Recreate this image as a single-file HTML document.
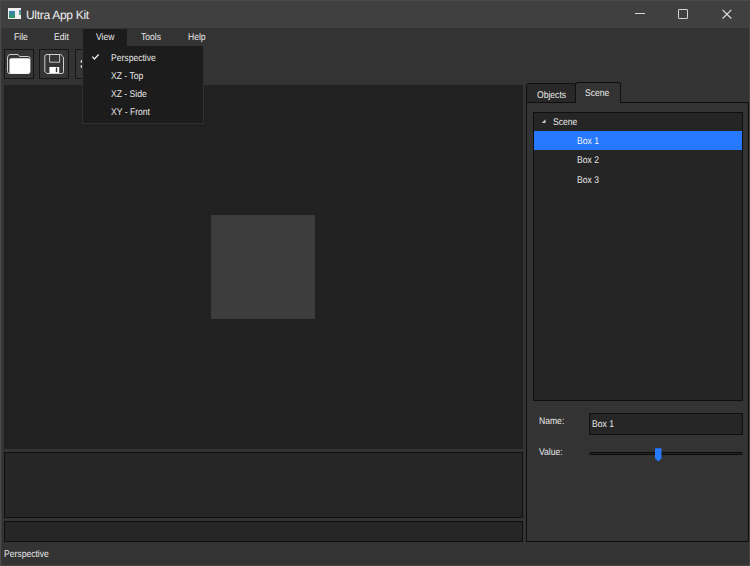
<!DOCTYPE html>
<html><head><meta charset="utf-8">
<style>
html,body{margin:0;padding:0;width:750px;height:566px;overflow:hidden;background:#333333;}
body{position:relative;font-family:"Liberation Sans",sans-serif;color:#e8e8e8;text-rendering:geometricPrecision;}
.a{position:absolute;box-sizing:border-box;}
.t{position:absolute;white-space:nowrap;font-size:9.75px;line-height:10px;transform:scaleX(0.88);transform-origin:0 0;color:#e8e8e8;margin-top:1px;}
</style></head><body>

<!-- title bar -->
<div class="a" style="left:0;top:0;width:750px;height:28px;background:#404040;"></div>
<!-- app icon -->
<div class="a" style="left:8px;top:8px;width:13px;height:11px;background:#efefef;"></div>
<div class="a" style="left:9px;top:11px;width:6px;height:7px;background:linear-gradient(180deg,#3a7fb8,#2f9a55);"></div>
<div class="a" style="left:19px;top:10px;width:2px;height:5px;background:linear-gradient(180deg,#4a8ac0,#5fae6a);"></div>
<div class="t" style="left:26px;top:8px;font-size:12px;line-height:14px;letter-spacing:-0.3px;color:#f0f0f0;transform:none;margin-top:0;">Ultra App Kit</div>
<!-- window controls -->
<div class="a" style="left:635px;top:13px;width:10px;height:1px;background:#d4d4d4;"></div>
<div class="a" style="left:678px;top:9px;width:10px;height:10px;border:1px solid #d4d4d4;border-radius:1px;"></div>
<svg class="a" style="left:720px;top:7px;" width="14" height="14" viewBox="0 0 14 14"><path d="M2.6 2.8L11.3 11.5M11.3 2.8L2.6 11.5" stroke="#e2e2e2" stroke-width="1.1" fill="none"/></svg>

<!-- menu bar -->
<div class="t" style="left:14px;top:32px;">File</div>
<div class="t" style="left:54px;top:32px;">Edit</div>
<div class="a" style="left:83px;top:29px;width:44px;height:18px;background:#1c1c1c;"></div>
<div class="t" style="left:96px;top:32px;">View</div>
<div class="t" style="left:141px;top:32px;">Tools</div>
<div class="t" style="left:188px;top:32px;">Help</div>

<!-- toolbar buttons -->
<div class="a" style="left:4px;top:49px;width:30px;height:30px;border:1px solid #161616;background:#353535;"></div>
<div class="a" style="left:39px;top:49px;width:30px;height:30px;border:1px solid #161616;background:#353535;"></div>
<div class="a" style="left:75px;top:49px;width:30px;height:30px;border:1px solid #161616;background:#353535;"></div>
<!-- folder icon -->
<svg class="a" style="left:0;top:44px;" width="40" height="40" viewBox="0 0 40 40">
  <path d="M7.5 14 Q7.5 10.5 10 10.5 L18 10.5 L19.6 12.5 L28.3 12.5 Q30 12.5 30 14.5 L30 27.5 Q30 29.5 28 29.5 L9.5 29.5 Q7.5 29.5 7.5 27.5 Z" fill="none" stroke="#cccccc" stroke-width="1"/>
  <path d="M9.4 16.3 Q9.4 14.3 11.4 14.3 L28 14.3 Q30 14.3 30 16.3 L30 27.7 Q30 29.7 28 29.7 L11.2 29.7 Q9.4 29.7 9.4 27.9 Z" fill="#ffffff"/>
</svg>
<!-- save icon -->
<svg class="a" style="left:34px;top:44px;" width="40" height="40" viewBox="0 0 40 40">
  <path d="M12.8 10.5 L26.8 10.5 L29.5 13.2 L29.5 27.8 Q29.5 29.5 27.8 29.5 L12.8 29.5 L10.8 27.5 L10.8 12.5 Q10.8 10.5 12.8 10.5 Z" fill="none" stroke="#cfcfcf" stroke-width="1"/>
  <path d="M15.6 10.5 L15.6 18.2 L25.6 18.2 L25.6 10.5" fill="none" stroke="#c4c4c4" stroke-width="1"/>
  <rect x="15.4" y="23" width="9.8" height="6" fill="#ffffff"/>
  <rect x="21.8" y="23.6" width="1.4" height="4.5" fill="#333"/>
</svg>
<!-- third icon sliver -->
<svg class="a" style="left:76px;top:56px;" width="7" height="16" viewBox="0 0 7 16"><path d="M6 3.5 L4.2 5.6 L6 7.2 Z M6 8.8 L4.2 10.4 L6 12.3 Z" fill="#d8d8d8"/></svg>

<!-- viewport -->
<div class="a" style="left:4px;top:85px;width:519px;height:364px;background:#212121;"></div>
<div class="a" style="left:211px;top:215px;width:104px;height:104px;background:#3d3d3d;box-shadow:inset 0 0 1px #303030;"></div>

<!-- console -->
<div class="a" style="left:4px;top:452px;width:519px;height:66px;border:1px solid #0f0f0f;background:#262626;"></div>
<div class="a" style="left:4px;top:521px;width:519px;height:21px;border:1px solid #0f0f0f;background:#262626;"></div>
<div class="t" style="left:4px;top:548.5px;">Perspective</div>

<!-- right panel -->
<div class="a" style="left:526px;top:83px;width:50px;height:20px;background:#282828;border:1px solid #0f0f0f;border-radius:3px 3px 0 0;"></div>
<div class="t" style="left:537px;top:90px;">Objects</div>
<div class="a" style="left:526px;top:102px;width:223px;height:440px;border:1px solid #0f0f0f;background:#333;"></div>
<div class="a" style="left:575px;top:82px;width:46px;height:21px;background:#333;border:1px solid #0f0f0f;border-bottom:none;border-radius:3px 3px 0 0;"></div>
<div class="t" style="left:585px;top:88px;">Scene</div>

<!-- tree -->
<div class="a" style="left:533px;top:112px;width:210px;height:289px;border:1px solid #0f0f0f;background:#252525;"></div>
<svg class="a" style="left:540px;top:118px;" width="7" height="7" viewBox="0 0 7 7"><path d="M5.5 1.3 L5.5 5 L1.8 5 Z" fill="#d0d0d0"/></svg>
<div class="t" style="left:552.5px;top:117px;">Scene</div>
<div class="a" style="left:534px;top:131px;width:208px;height:19px;background:#2678ff;"></div>
<div class="t" style="left:577px;top:136px;color:#f4f4f4;">Box 1</div>
<div class="t" style="left:577px;top:155px;">Box 2</div>
<div class="t" style="left:577px;top:175px;">Box 3</div>

<!-- properties -->
<div class="t" style="left:538.6px;top:416px;">Name:</div>
<div class="a" style="left:589px;top:413px;width:154px;height:22px;border:1px solid #0f0f0f;background:#262626;"></div>
<div class="t" style="left:592px;top:419px;">Box 1</div>
<div class="t" style="left:538.6px;top:447px;">Value:</div>
<div class="a" style="left:589px;top:452px;width:154px;height:3px;border:1px solid #0a0a0a;border-radius:2px;background:#262626;"></div>
<svg class="a" style="left:654px;top:447px;" width="9" height="16" viewBox="0 0 9 16"><path d="M1 1.8 Q1 1.2 1.6 1.2 L6.9 1.2 Q7.5 1.2 7.5 1.8 L7.5 11.6 L4.25 14.4 L1 11.6 Z" fill="#2678ff"/></svg>

<!-- dropdown -->
<div class="a" style="left:82px;top:46px;width:122px;height:78px;background:#1c1c1c;border:1px solid #313131;border-top:none;"></div>
<svg class="a" style="left:90px;top:52px;" width="12" height="10" viewBox="0 0 12 10"><path d="M2.3 4.6 L4.4 6.9 L8.7 2.5" stroke="#e8e8e8" stroke-width="1.4" fill="none"/></svg>
<div class="t" style="left:111px;top:53px;">Perspective</div>
<div class="t" style="left:111px;top:71px;">XZ - Top</div>
<div class="t" style="left:111px;top:89px;">XZ - Side</div>
<div class="t" style="left:111px;top:107px;">XY - Front</div>

<!-- window edges -->
<div class="a" style="left:0;top:0;width:750px;height:1px;background:#4c4c4c;"></div>
<div class="a" style="left:0;top:0;width:1px;height:566px;background:#4a4a4a;"></div>
<div class="a" style="left:1px;top:28px;width:1px;height:537px;background:#393939;"></div>
<div class="a" style="left:749px;top:0;width:1px;height:566px;background:#444;"></div>
<div class="a" style="left:0;top:565px;width:750px;height:1px;background:#474747;"></div>
</body></html>
